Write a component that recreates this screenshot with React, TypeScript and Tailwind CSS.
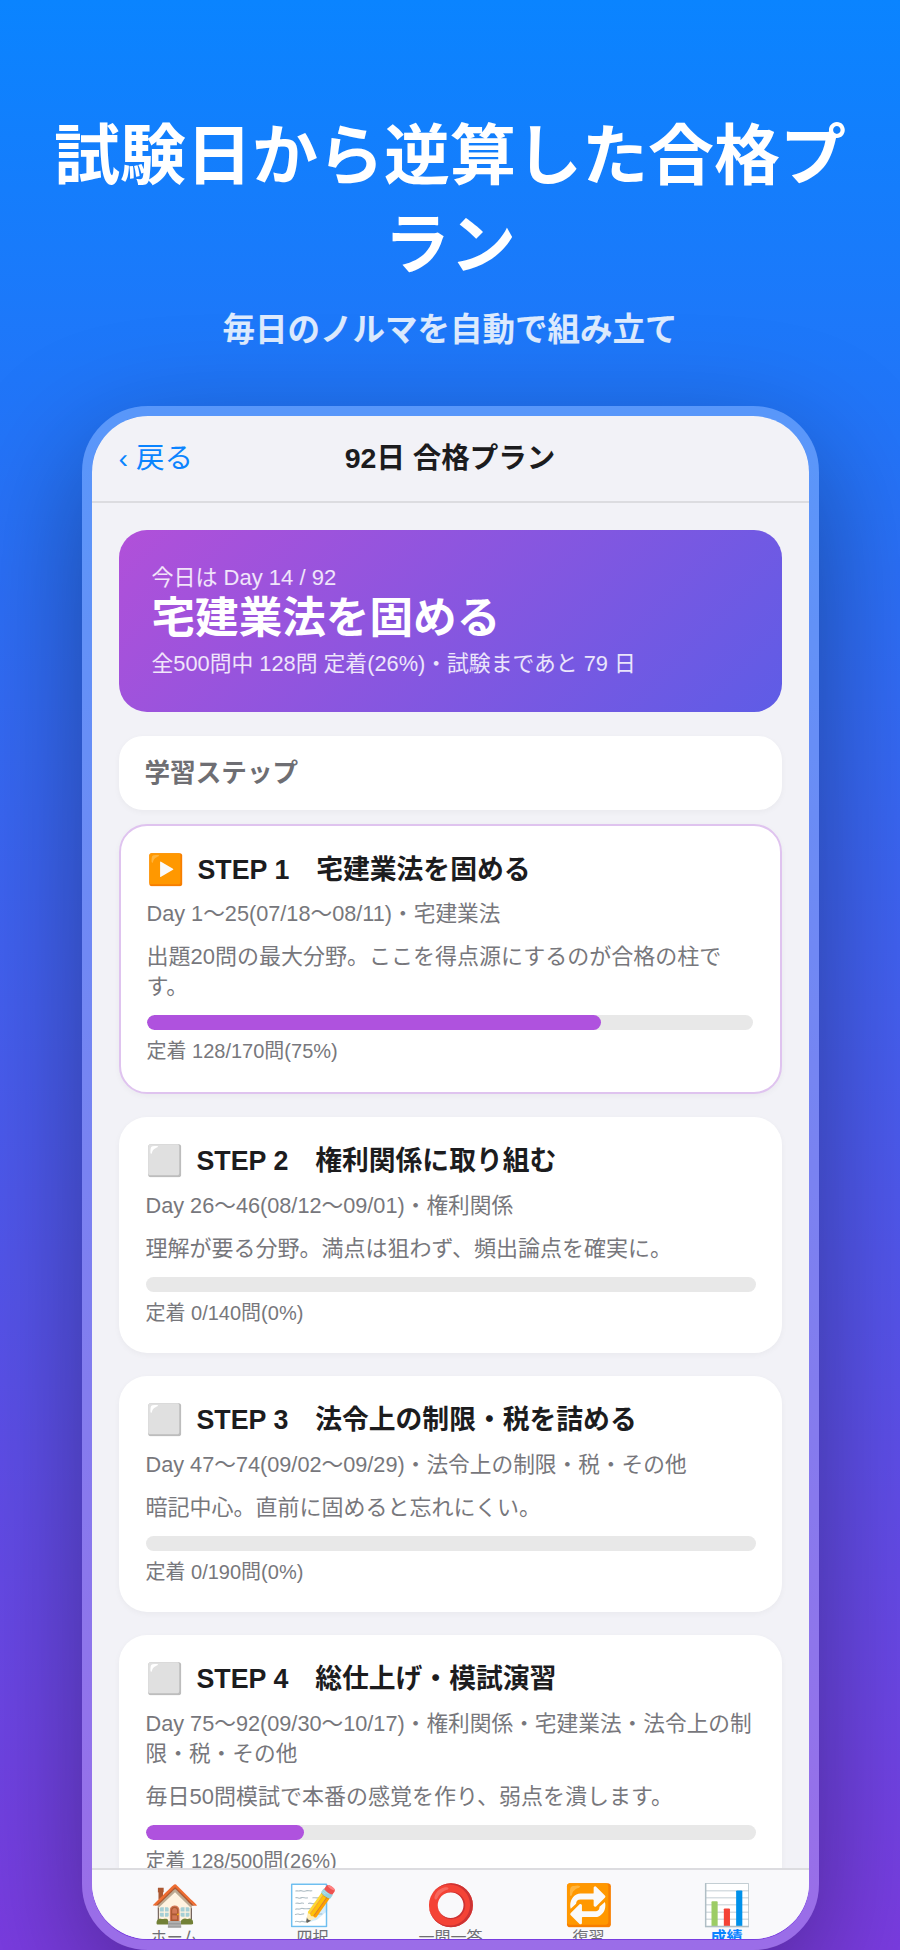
const sans = `font-['Liberation_Sans','Noto_Sans_CJK_JP',sans-serif]`;

type Step = { icon: string; title: string; meta: string; desc: string; pct: number; label: string; active?: boolean };

const steps: Step[] = [
  { icon: "▶️", title: "STEP 1　宅建業法を固める", meta: "Day 1〜25(07/18〜08/11)・宅建業法", desc: "出題20問の最大分野。ここを得点源にするのが合格の柱です。", pct: 75, label: "定着 128/170問(75%)", active: true },
  { icon: "⬜", title: "STEP 2　権利関係に取り組む", meta: "Day 26〜46(08/12〜09/01)・権利関係", desc: "理解が要る分野。満点は狙わず、頻出論点を確実に。", pct: 0, label: "定着 0/140問(0%)" },
  { icon: "⬜", title: "STEP 3　法令上の制限・税を詰める", meta: "Day 47〜74(09/02〜09/29)・法令上の制限・税・その他", desc: "暗記中心。直前に固めると忘れにくい。", pct: 0, label: "定着 0/190問(0%)" },
  { icon: "⬜", title: "STEP 4　総仕上げ・模試演習", meta: "Day 75〜92(09/30〜10/17)・権利関係・宅建業法・法令上の制限・税・その他", desc: "毎日50問模試で本番の感覚を作り、弱点を潰します。", pct: 26, label: "定着 128/500問(26%)" },
];

const tabs = [
  { icon: "🏠", label: "ホーム" },
  { icon: "📝", label: "四択" },
  { icon: "⭕", label: "一問一答" },
  { icon: "🔁", label: "復習" },
  { icon: "📊", label: "成績", active: true },
];

function StepCard({ s }: { s: Step }) {
  return (
    <div className={`bg-white rounded-[28px] shadow-[0_2px_6px_rgba(0,0,0,0.04)] ${s.active ? "border-2 border-[#dfc3ef] pl-[26px] pr-[27px] pt-[24px] pb-[25px]" : "pl-[27px] pr-[26px] pt-[24px] pb-[24px]"}`}>
      <div className="flex items-center h-[40px]">
        <span className="text-[30px] leading-[40px] w-[51px] shrink-0">{s.icon}</span>
        <span className="text-[26.8px] font-bold text-[#1c1c1e] leading-[40px]">{s.title}</span>
      </div>
      <div className={`${s.active ? "mt-[9px]" : "mt-[10px]"} text-[21.7px] leading-[30px] text-[#77777c]`}>{s.meta}</div>
      <div className="mt-[13px] text-[22px] leading-[30px] text-[#77777c]">{s.desc}</div>
      <div className="mt-[13px] h-[15px] rounded-full bg-[#e8e8e8] overflow-hidden">
        <div className="h-full rounded-full bg-[#af52de]" style={{ width: `${s.pct}%` }} />
      </div>
      <div className="mt-[5px] text-[20px] leading-[32px] text-[#77777c]">{s.label}</div>
    </div>
  );
}

export default function App() {
  return (
    <div className={`${sans} relative w-[900px] h-[1950px] overflow-hidden bg-[linear-gradient(180deg,#0a84ff_0%,#7a3ce0_100%)] flex flex-col items-center`}>
      <h1 className="mt-[112px] w-[820px] text-center text-[66px] leading-[89px] font-bold text-white">試験日から逆算した合格プラン</h1>
      <p className="mt-[18px] text-[32.5px] leading-[44px] font-semibold text-white/85">毎日のノルマを自動で組み立て</p>
      <div className="mt-[54px] w-[737px] h-[1544px] shrink-0 rounded-[66px] border-[10px] border-[#ffffff40] bg-clip-padding shadow-[0_40px_120px_rgba(0,0,0,0.35)]">
        <div className="h-[1523px] rounded-[56px] overflow-hidden bg-[#f2f2f7] flex flex-col">
          <div className="shrink-0 h-[87px] border-b-2 border-[#dcdce0] relative flex items-center justify-center">
            <span className="absolute left-[27px] text-[28.5px] text-[#0a84ff]">‹ 戻る</span>
            <span className="text-[28.5px] font-bold text-[#1c1c1e]">92日 合格プラン</span>
          </div>
          <div className="h-[1365px] shrink-0 overflow-hidden px-[27px] pt-[27px]">
            <div className="h-[182px] rounded-[28px] bg-[linear-gradient(135deg,#b150d9,#5e5ce6)] px-[33px] pt-[33px] text-white">
              <div className="text-[22px] leading-[30px] text-white/85">今日は Day 14 / 92</div>
              <div className="text-[43.6px] leading-[51px] font-bold">宅建業法を固める</div>
              <div className="mt-[3px] text-[21.8px] leading-[34px] text-white/85">全500問中 128問 定着(26%)・試験まであと 79 日</div>
            </div>
            <div className="mt-[24px] h-[74px] rounded-[24px] bg-white shadow-[0_2px_6px_rgba(0,0,0,0.04)] px-[26px] flex items-center text-[25.6px] font-bold text-[#6e6e73]">学習ステップ</div>
            <div className="mt-[14px] flex flex-col gap-[23px]">
              {steps.map((s) => <StepCard key={s.title} s={s} />)}
            </div>
          </div>
          <div className="flex-1 min-h-0 overflow-hidden bg-[#f9f9fb] border-t-2 border-[#dcdce0] pl-[14px] pr-[13px] grid grid-cols-5">
            {tabs.map((t) => (
              <div key={t.label} className="flex flex-col items-center pt-[12px]">
                <span className="text-[40px] leading-[46px]">{t.icon}</span>
                <span className={`-mt-[2px] text-[16px] leading-[24px] ${t.active ? "text-[#0a84ff] font-bold" : "text-[#6e6e73]"}`}>{t.label}</span>
              </div>
            ))}
          </div>
        </div>
      </div>
    </div>
  );
}
